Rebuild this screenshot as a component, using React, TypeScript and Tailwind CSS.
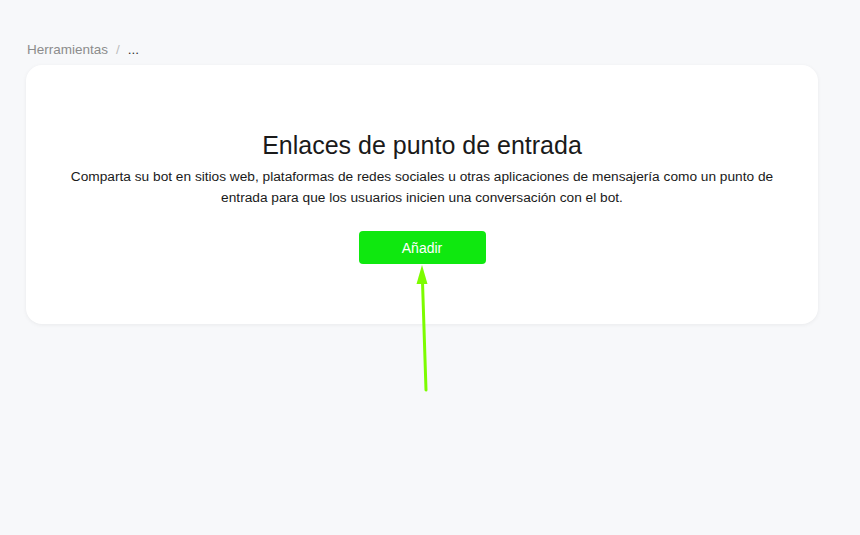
import React from 'react';

export default function App() {
  return (
    <div
      className="relative min-h-[535px] w-full bg-[#f7f8fa] px-[26px] pt-[40px]"
      style={{ fontFamily: '"Liberation Sans", Arial, sans-serif' }}
    >
      {/* breadcrumb */}
      <div className="flex items-center gap-[8px] pl-[1px] text-[13.5px] leading-[20px] text-[#8c8c8c]">
        <span>Herramientas</span>
        <span className="text-[#bdbdbd]">/</span>
        <span className="text-[#333]">...</span>
      </div>

      {/* card */}
      <div className="mt-[5px] w-[792px] rounded-[16px] bg-white px-[40px] pt-[64px] pb-[60px] shadow-[0_1px_4px_rgba(0,0,0,0.06)]">
        <div className="flex flex-col items-center text-center">
          <h1 className="text-[25px] leading-[32px] font-normal text-[#1a1a1a]">
            Enlaces de punto de entrada
          </h1>
          <p className="mt-[5px] text-[13.7px] leading-[21px] text-[#1a1a1a]">
            Comparta su bot en sitios web, plataformas de redes sociales u otras aplicaciones de mensajería como un punto de entrada para que los usuarios inicien una conversación con el bot.
          </p>
          <button className="mt-[23px] h-[33px] w-[127px] rounded-[4px] bg-[#0fe80f] pt-[2px] text-[14px] text-white">
            Añadir
          </button>
        </div>
      </div>

      {/* annotation arrow */}
      <svg className="absolute left-[410px] top-[262px]" width="30" height="135" viewBox="0 0 30 135">
        <line x1="16" y1="128" x2="12.5" y2="20" stroke="#7cfc00" strokeWidth="3" strokeLinecap="round" />
        <polygon points="12,3 6.5,22 17.5,22" fill="#7cfc00" />
      </svg>
    </div>
  );
}
